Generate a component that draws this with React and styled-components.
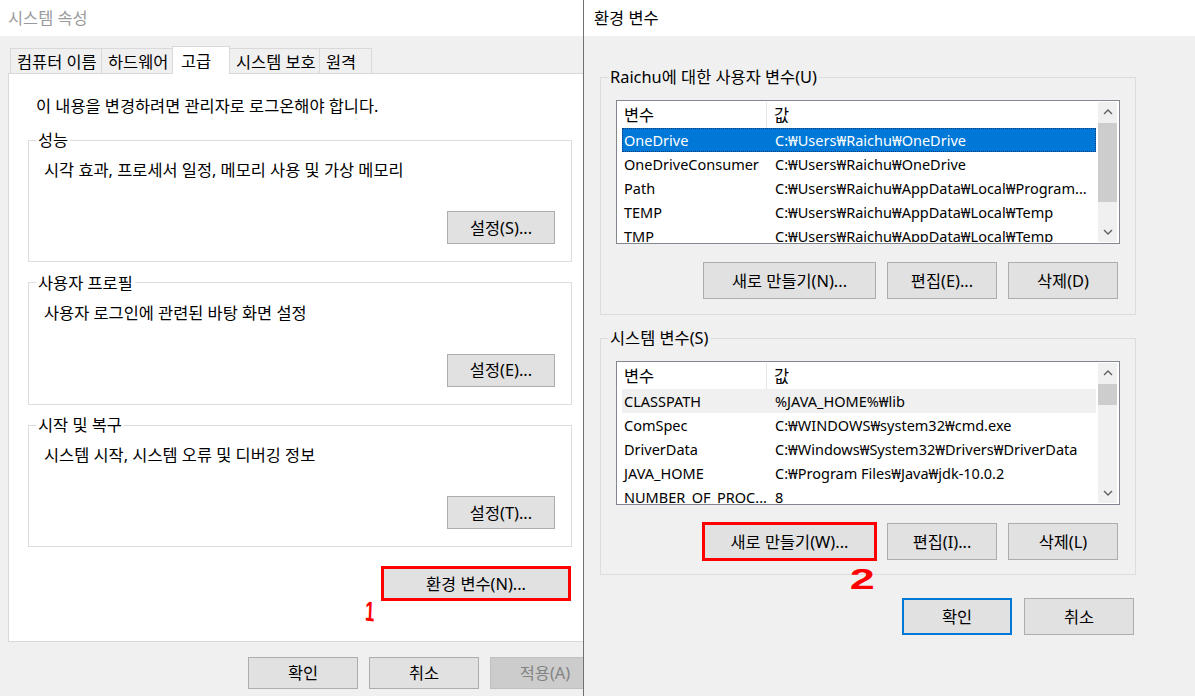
import React from 'react'
import styled, { createGlobalStyle } from 'styled-components'

const GlobalStyle = createGlobalStyle`
  html, body {
    margin: 0;
    padding: 0;
  }
  body {
    font-family: "Noto Sans", "Noto Sans CJK KR", sans-serif;
    font-size: 16.4px;
    color: #000;
    background: #f0f0f0;
  }
  * {
    box-sizing: border-box;
  }
`

const Screen = styled.div`
    display: flex;
    width: 1195px;
    height: 696px;
    overflow: hidden;
`

const BackWindow = styled.div`
    flex: none;
    width: 583px;
    height: 100%;
    overflow: hidden;
`

const BackFrame = styled.div`
    width: 600px;
    height: 100%;
    display: flex;
    flex-direction: column;
`

const FrontWindow = styled.div`
    flex: 1;
    min-width: 0;
    height: 100%;
    display: flex;
    flex-direction: column;
    border-left: 1px solid #707070;
    overflow: hidden;
`

const TitleBar = styled.div`
    flex: none;
    height: 36px;
    display: flex;
    align-items: center;
    padding-left: ${p => p.$indent}px;
    background: #fff;
    color: ${p => p.$inactive ? '#9a9a9a' : '#000'};
    line-height: 20px;
`

const Body = styled.div`
    flex: 1;
    background: #f0f0f0;
    padding: ${p => p.$pad};
`

const TabStrip = styled.div`
    display: flex;
    align-items: flex-end;
    height: 27px;
    padding-left: 2px;
`

const Tab = styled.div`
    position: relative;
    z-index: ${p => p.$active ? 1 : 0};
    width: ${p => p.$w}px;
    height: ${p => p.$active ? 28 : 25}px;
    margin-bottom: ${p => p.$active ? -1 : 0}px;
    padding: 0 0 ${p => p.$active ? 2 : 0}px ${p => p.$active ? 8 : 6}px;
    display: flex;
    align-items: center;
    background: ${p => p.$active ? '#fff' : '#f0f0f0'};
    border: 1px solid #d9d9d9;
    border-bottom: none;
    white-space: nowrap;

    & + & {
        margin-left: -1px;
    }
`

const TabPanel = styled.div`
    width: 584px;
    display: flex;
    flex-direction: column;
    background: #fff;
    border: 1px solid #d9d9d9;
    padding: 22px 19px 41px 19px;
`

const Intro = styled.div`
    margin-left: 8px;
    line-height: 20px;
`

const GroupStack = styled.div`
    display: flex;
    flex-direction: column;
    gap: 10.5px;
    margin-top: 14px;
`

const Group = styled.fieldset`
    margin: ${p => p.$gapTop || 0}px 0 0 0;
    min-width: 0;
    width: ${p => p.$w ? p.$w + 'px' : 'auto'};
    border: 1px solid #dcdcdc;
    padding: ${p => p.$pad};
`

const Legend = styled.legend`
    margin-left: -8px;
    padding: 0 2px;
    line-height: 20px;
`

const GroupText = styled.div`
    line-height: 20px;
`

const ButtonRow = styled.div`
    position: relative;
    display: flex;
    justify-content: flex-end;
    gap: ${p => p.$gap || 11}px;
    margin-top: ${p => p.$top}px;
    padding-right: ${p => p.$right || 0}px;
`

const Button = styled.button`
    flex: none;
    width: ${p => p.$w}px;
    height: ${p => p.$h}px;
    padding: 0;
    display: inline-flex;
    align-items: center;
    justify-content: center;
    font: inherit;
    line-height: 20px;
    white-space: nowrap;
    color: ${p => p.$off ? '#838383' : '#000'};
    background: ${p => p.$off ? '#cccccc' : '#e1e1e1'};
    border: ${p => p.$primary ? '2px solid #0078d7' : p.$off ? '1px solid #bfbfbf' : '1px solid #adadad'};
    border-radius: 0;
    outline: ${p => p.$marked ? '3px solid #ff0000' : 'none'};
    outline-offset: -2px;
`

const Mark = styled.span`
    position: absolute;
    left: ${p => p.$x}px;
    top: ${p => p.$y}px;
    font-family: "Liberation Sans", Arial, sans-serif;
    font-weight: bold;
    font-size: ${p => p.$size || 30}px;
    line-height: 1;
    color: #ff0000;
    transform: scaleX(${p => p.$sx}) rotate(${p => p.$rot || 0}deg);
`

const BackFooter = styled.div`
    display: flex;
    justify-content: flex-end;
    gap: 11px;
    margin-top: 15px;
`

const FrontFooter = styled.div`
    width: 536px;
    display: flex;
    justify-content: flex-end;
    gap: 12px;
    margin-top: 23px;
    padding-right: 2px;
`

const ListBox = styled.div`
    height: 144px;
    display: flex;
    background: #fff;
    border: 1px solid #828790;
    padding: 1px 2px 1px 5px;
`

const ListContent = styled.div`
    flex: 1;
    min-width: 0;
    overflow: hidden;
`

const ListHeader = styled.div`
    display: flex;
    height: 26px;
    line-height: 26px;
`

const HeadCell = styled.div`
    flex: ${p => p.$first ? 'none' : 1};
    width: ${p => p.$first ? '145px' : 'auto'};
    padding-left: ${p => p.$first ? 2 : 7}px;
    border-right: ${p => p.$first ? '1px solid #e5e5e5' : 'none'};
`

const Row = styled.div`
    display: flex;
    height: 24px;
    line-height: 24px;
    margin-right: 2px;
    font-size: 14.5px;
    white-space: nowrap;
    color: ${p => p.$state === 'focus' ? '#fff' : '#000'};
    background: ${p => p.$state === 'focus' ? '#0078d7' : p.$state === 'soft' ? '#f0f0f0' : 'transparent'};
    outline: ${p => p.$state === 'focus' ? '1px dotted #0b3e78' : 'none'};
    outline-offset: -1px;
`

const Cell = styled.div`
    flex: ${p => p.$first ? 'none' : 1};
    width: ${p => p.$first ? '151px' : 'auto'};
    min-width: 0;
    padding-left: 2px;
    overflow: hidden;
`

const ScrollBar = styled.div`
    flex: none;
    width: 19px;
    display: flex;
    flex-direction: column;
    background: #f0f0f0;
`

const ScrollArrow = styled.div`
    flex: none;
    height: 20px;
    display: flex;
    align-items: center;
    justify-content: center;
`

const Track = styled.div`
    flex: 1;
`

const Thumb = styled.div`
    margin-top: 1px;
    height: ${p => p.$size}px;
    background: #cdcdcd;
`

const Chevron = ({ down }) => (
  <svg width="10" height="6" viewBox="0 0 10 6">
    <polyline
      points={down ? '1,1 5,5 9,1' : '1,5 5,1 9,5'}
      fill="none"
      stroke="#606060"
      strokeWidth="1.4"
    />
  </svg>
)

const userVars = [
  ['OneDrive', 'C:₩Users₩Raichu₩OneDrive', 'focus'],
  ['OneDriveConsumer', 'C:₩Users₩Raichu₩OneDrive'],
  ['Path', 'C:₩Users₩Raichu₩AppData₩Local₩Program...'],
  ['TEMP', 'C:₩Users₩Raichu₩AppData₩Local₩Temp'],
  ['TMP', 'C:₩Users₩Raichu₩AppData₩Local₩Temp'],
]

const systemVars = [
  ['CLASSPATH', '%JAVA_HOME%₩lib', 'soft'],
  ['ComSpec', 'C:₩WINDOWS₩system32₩cmd.exe'],
  ['DriverData', 'C:₩Windows₩System32₩Drivers₩DriverData'],
  ['JAVA_HOME', 'C:₩Program Files₩Java₩jdk-10.0.2'],
  ['NUMBER_OF_PROC...', '8'],
]

const tabs = [
  ['컴퓨터 이름', 92],
  ['하드웨어', 72],
  ['고급', 58, true],
  ['시스템 보호', 91],
  ['원격', 53],
]

const sections = [
  ['성능', '시각 효과, 프로세서 일정, 메모리 사용 및 가상 메모리', '설정(S)...'],
  ['사용자 프로필', '사용자 로그인에 관련된 바탕 화면 설정', '설정(E)...'],
  ['시작 및 복구', '시스템 시작, 시스템 오류 및 디버깅 정보', '설정(T)...'],
]

function VarList({ rows, thumb }) {
  return (
    <ListBox>
      <ListContent>
        <ListHeader>
          <HeadCell $first>변수</HeadCell>
          <HeadCell>값</HeadCell>
        </ListHeader>
        {rows.map(([name, value, state]) => (
          <Row key={name} $state={state}>
            <Cell $first>{name}</Cell>
            <Cell>{value}</Cell>
          </Row>
        ))}
      </ListContent>
      <ScrollBar>
        <ScrollArrow><Chevron /></ScrollArrow>
        <Track><Thumb $size={thumb} /></Track>
        <ScrollArrow><Chevron down /></ScrollArrow>
      </ScrollBar>
    </ListBox>
  )
}

export default function App() {
  return (
    <Screen>
      <GlobalStyle />
      <BackWindow>
        <BackFrame>
          <TitleBar $indent={8} $inactive>시스템 속성</TitleBar>
          <Body $pad="10px 0 0 8px">
            <TabStrip>
              {tabs.map(([label, w, active]) => (
                <Tab key={label} $w={w} $active={active}>{label}</Tab>
              ))}
            </TabStrip>
            <TabPanel>
              <Intro>이 내용을 변경하려면 관리자로 로그온해야 합니다.</Intro>
              <GroupStack>
                {sections.map(([title, text, action]) => (
                  <Group key={title} $pad="10px 16px 17px 15px">
                    <Legend>{title}</Legend>
                    <GroupText>{text}</GroupText>
                    <ButtonRow $top={31}>
                      <Button $w={108} $h={33}>{action}</Button>
                    </ButtonRow>
                  </Group>
                ))}
              </GroupStack>
              <ButtonRow $top={20} $right={2}>
                <Button $w={188} $h={33} $marked>환경 변수(N)...</Button>
                <Mark $x={334} $y={31} $sx={0.6} $rot={4} $size={28}>1</Mark>
              </ButtonRow>
            </TabPanel>
            <BackFooter>
              <Button $w={110} $h={32}>확인</Button>
              <Button $w={110} $h={32}>취소</Button>
              <Button $w={110} $h={32} $off>적용(A)</Button>
            </BackFooter>
          </Body>
        </BackFrame>
      </BackWindow>

      <FrontWindow>
        <TitleBar $indent={10}>환경 변수</TitleBar>
        <Body $pad="31px 0 0 16px">
          <Group $w={536} $pad="13px 15px 15px 15px">
            <Legend>Raichu에 대한 사용자 변수(U)</Legend>
            <VarList rows={userVars} thumb={79} />
            <ButtonRow $top={18} $right={2}>
              <Button $w={173} $h={37}>새로 만들기(N)...</Button>
              <Button $w={110} $h={37}>편집(E)...</Button>
              <Button $w={110} $h={37}>삭제(D)</Button>
            </ButtonRow>
          </Group>
          <Group $w={536} $gapTop={13} $pad="13px 15px 14px 15px">
            <Legend>시스템 변수(S)</Legend>
            <VarList rows={systemVars} thumb={21} />
            <ButtonRow $top={18} $right={2}>
              <Button $w={173} $h={37} $marked>새로 만들기(W)...</Button>
              <Button $w={110} $h={37}>편집(I)...</Button>
              <Button $w={110} $h={37}>삭제(L)</Button>
              <Mark $x={238} $y={41} $sx={1.5}>2</Mark>
            </ButtonRow>
          </Group>
          <FrontFooter>
            <Button $w={110} $h={37} $primary>확인</Button>
            <Button $w={110} $h={37}>취소</Button>
          </FrontFooter>
        </Body>
      </FrontWindow>
    </Screen>
  )
}
